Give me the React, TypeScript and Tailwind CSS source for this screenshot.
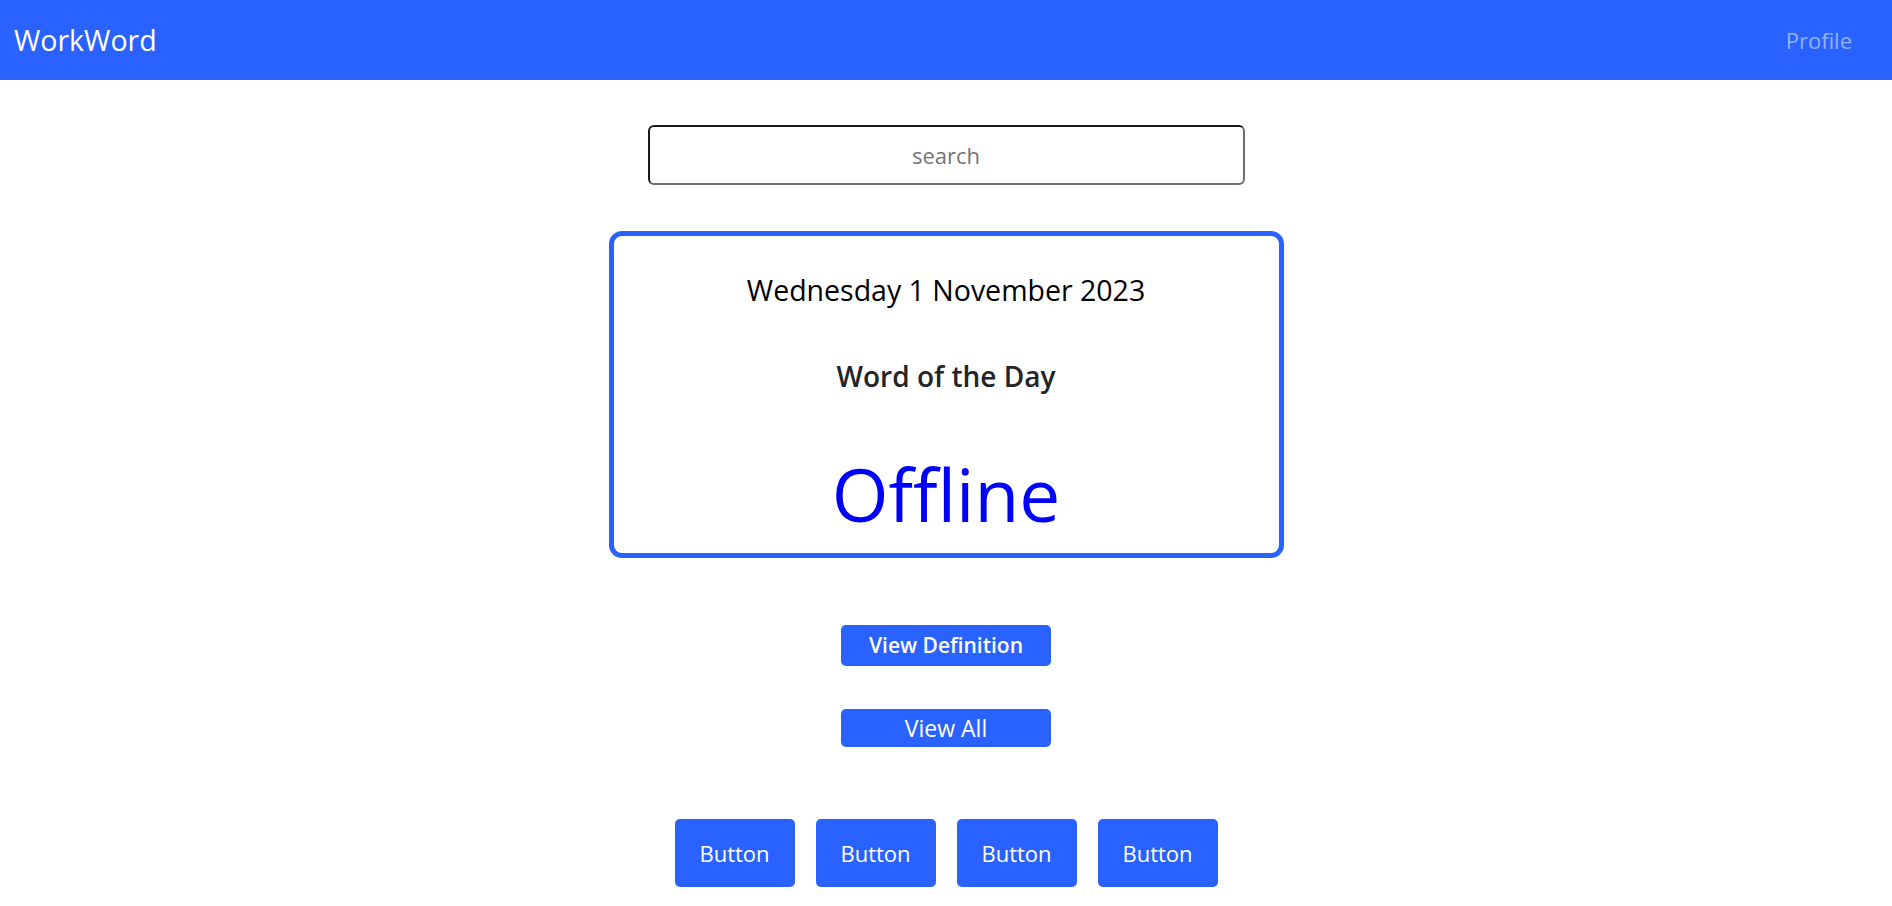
import React from "react";

const font = { fontFamily: '"Open Sans", "Noto Sans", sans-serif' };

const NavBar = () => (
  <nav className="flex h-[80px] items-center justify-between bg-[#2962ff] pl-[14px] pr-[40px]">
    <span className="text-[28.5px] leading-none text-white">WorkWord</span>
    <a href="#" className="text-[22px] leading-none text-[#92b1ff]">
      Profile
    </a>
  </nav>
);

const WordCard = () => (
  <div className="flex h-[327px] w-[675px] flex-col items-center rounded-[13px] border-[5px] border-[#2962ff] bg-white pt-[40px]">
    <p className="text-[28.5px] leading-none text-black">Wednesday 1 November 2023</p>
    <h2 className="mt-[57px] text-[28px] font-semibold leading-none text-[#212529]">
      Word of the Day
    </h2>
    <p className="mt-[67px] text-[73px] leading-none text-[#0000ff]">Offline</p>
  </div>
);

export default function App() {
  const buttons = ["Button", "Button", "Button", "Button"];

  return (
    <div className="min-h-screen bg-white" style={font}>
      <NavBar />

      <div className="flex justify-center pt-[45px]">
        <input
          type="text"
          placeholder="search"
          className="h-[60px] w-[597px] rounded-[6px] border-2 border-t-[#1a1a1a] border-l-[#1a1a1a] border-b-[#6e6e6e] border-r-[#6e6e6e] bg-white text-center text-[22px] text-black outline-none placeholder:text-[#757575]"
        />
      </div>

      <div className="flex justify-center pt-[46px]">
        <WordCard />
      </div>

      <div className="flex flex-col items-center pt-[67px]">
        <button className="h-[41px] w-[210px] rounded-[5px] bg-[#2962ff] text-[21px] font-semibold text-white">
          View Definition
        </button>
        <button className="mt-[43px] h-[38px] w-[210px] rounded-[5px] bg-[#2962ff] text-[23px] text-white">
          View All
        </button>
      </div>

      <div className="flex justify-center gap-[21px] pt-[72px]">
        {buttons.map((label, i) => (
          <button
            key={i}
            className="h-[68px] w-[120px] rounded-[5px] bg-[#2962ff] text-[22px] text-white"
          >
            {label}
          </button>
        ))}
      </div>
    </div>
  );
}
